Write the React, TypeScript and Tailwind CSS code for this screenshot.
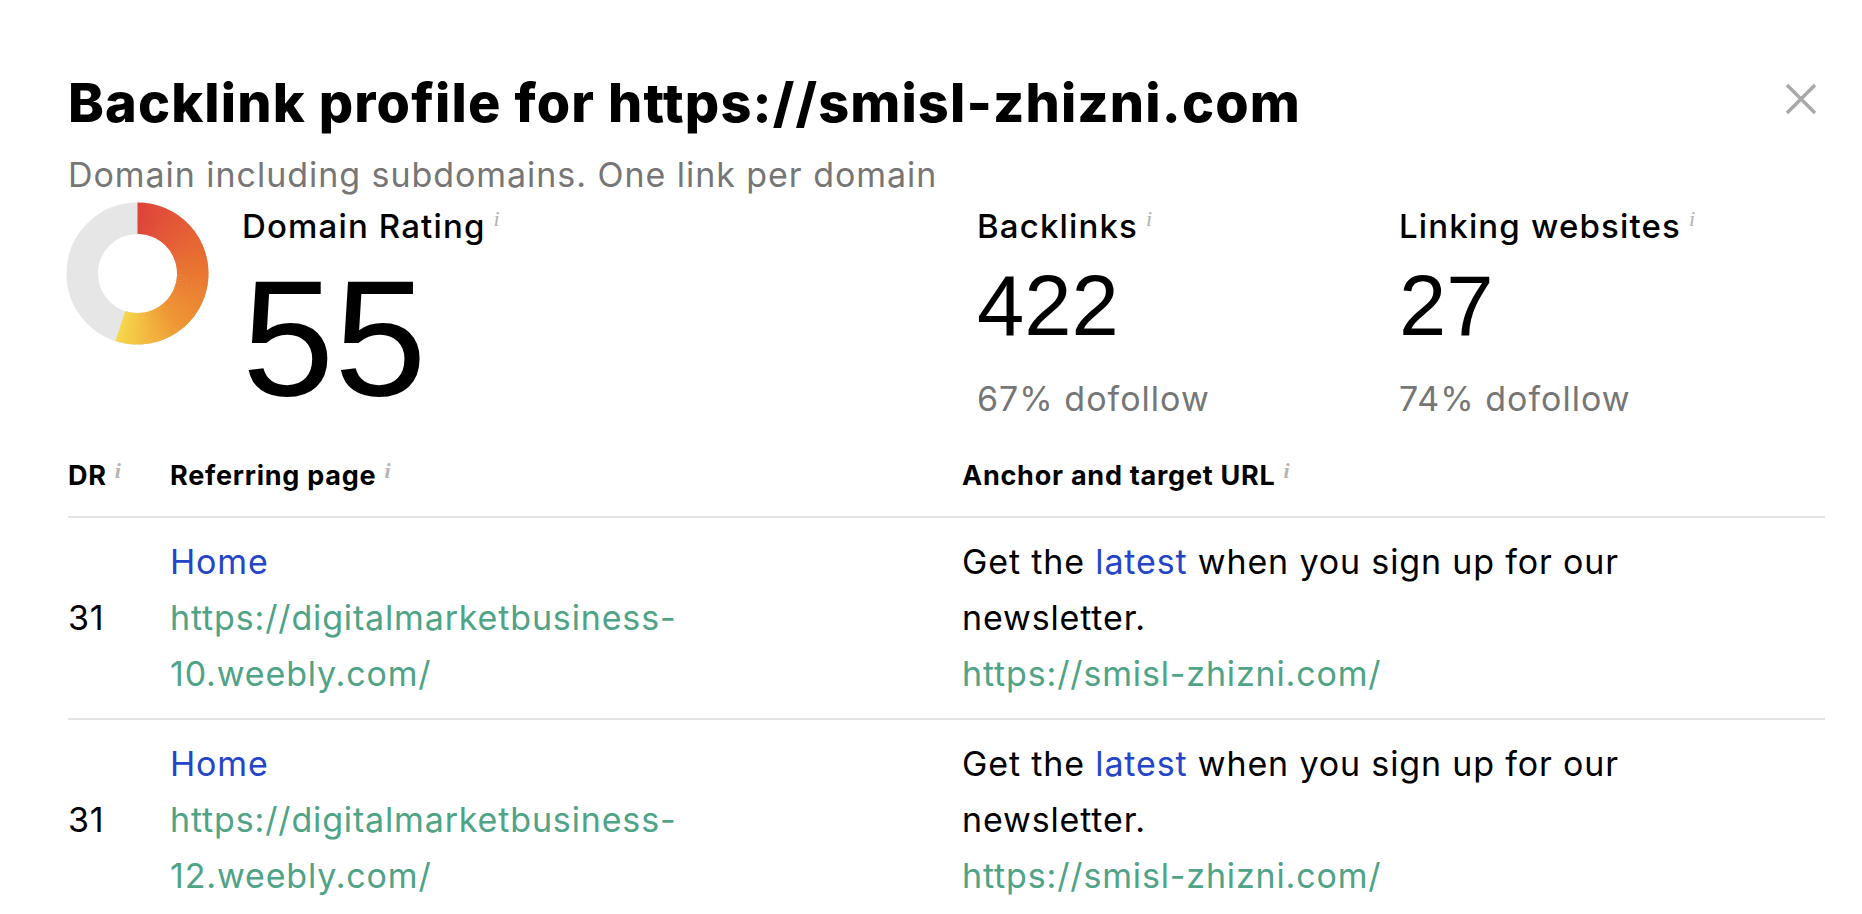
import React from 'react';

const body = { fontFamily: 'Inter, "Noto Sans", sans-serif' };
const nums = { fontFamily: '"Liberation Sans", Arial, sans-serif' };

// small grey "i" next to labels
const Info = () => (
    <span
        className="ml-[8px] align-top text-[22px] italic leading-none tracking-normal text-[#b4b4b4]"
        style={{ fontFamily: '"Liberation Serif", serif' }}
    >
        i
    </span>
);

const mix = (a: number[], b: number[], t: number) => a.map((v, i) => Math.round(v + (b[i] - v) * t));

const stops: [number, number[]][] = [
    [0, [223, 68, 58]],
    [0.4, [232, 112, 50]],
    [0.72, [239, 150, 52]],
    [1, [246, 214, 74]],
];

const colorAt = (t: number) => {
    for (let i = 0; i < stops.length - 1; i++) {
        const [t0, c0] = stops[i];
        const [t1, c1] = stops[i + 1];
        if (t <= t1) {
            const c = mix(c0, c1, (t - t0) / (t1 - t0));
            return `rgb(${c[0]},${c[1]},${c[2]})`;
        }
    }
    const c = stops[stops.length - 1][1];
    return `rgb(${c[0]},${c[1]},${c[2]})`;
};

const Donut: React.FC<{ value: number }> = ({ value }) => {
    const cx = 72.5;
    const r = 55.25;
    const span = (value / 100) * 360;
    const n = 60;
    const pt = (deg: number) => {
        const a = ((deg - 90) * Math.PI) / 180;
        return `${cx + r * Math.cos(a)} ${cx + r * Math.sin(a)}`;
    };
    const segs = [];
    for (let i = 0; i < n; i++) {
        const a0 = (i * span) / n;
        const a1 = Math.min(span, ((i + 1) * span) / n + (i < n - 1 ? 0.6 : 0));
        segs.push(
            <path
                key={i}
                d={`M ${pt(a0)} A ${r} ${r} 0 0 1 ${pt(a1)}`}
                fill="none"
                stroke={colorAt(i / (n - 1))}
                strokeWidth={31.5}
            />
        );
    }
    return (
        <svg width="145" height="145" viewBox="0 0 145 145" className="-ml-[3px] shrink-0">
            <circle cx={cx} cy={cx} r={r} fill="none" stroke="#e6e6e6" strokeWidth={31.5} />
            {segs}
        </svg>
    );
};

const rows = [
    { dr: 31, url: 'https://digitalmarketbusiness-10.weebly.com/' },
    { dr: 31, url: 'https://digitalmarketbusiness-12.weebly.com/' },
];

export default function App() {
    return (
        <div className="min-h-screen bg-white pl-[68px] pr-[37px] pt-[72px] text-black" style={body}>
            {/* Header */}
            <div className="flex items-start justify-between">
                <h1 className="text-[54px] font-extrabold leading-[62px] tracking-[0.021em]">
                    Backlink profile for https://smisl-zhizni.com
                </h1>
                <button className="mr-[8px] mt-[11px]">
                    <svg width="32" height="32" viewBox="0 0 32 32">
                        <path d="M2 2 L30 30 M30 2 L2 30" stroke="#a9a9a9" strokeWidth="3.5" />
                    </svg>
                </button>
            </div>
            <p className="mt-[21px] text-[34px] leading-[40px] tracking-[0.028em] text-[#767676]">
                Domain including subdomains. One link per domain
            </p>

            {/* Stats */}
            <div className="mt-[6px] flex">
                <div className="flex w-[909px] gap-[32px]">
                    <Donut value={55} />
                    <div className="pt-[7px]">
                        <div className="text-[33px] font-medium leading-[36px] tracking-[0.035em]">
                            Domain Rating
                            <Info />
                        </div>
                        <div className="mt-[11px] text-[166px] leading-[166px]" style={nums}>
                            55
                        </div>
                    </div>
                </div>
                {[
                    { label: 'Backlinks', value: '422', sub: '67% dofollow' },
                    { label: 'Linking websites', value: '27', sub: '74% dofollow' },
                ].map((s) => (
                    <div key={s.label} className="w-[422px] pt-[7px]">
                        <div className="text-[33px] font-medium leading-[36px] tracking-[0.035em]">
                            {s.label}
                            <Info />
                        </div>
                        <div className="mt-[19px] text-[85px] leading-[85px]" style={nums}>
                            {s.value}
                        </div>
                        <div className="mt-[31px] text-[34px] leading-[40px] tracking-[0.03em] text-[#767676]">
                            {s.sub}
                        </div>
                    </div>
                ))}
            </div>

            {/* Table */}
            <div className="mt-[39px]">
                <div className="flex border-b-2 border-[#e3e3e3] pb-[24px] text-[27px] font-bold leading-[32px] tracking-[0.028em]">
                    <div className="w-[102px]">
                        DR
                        <Info />
                    </div>
                    <div className="w-[792px]">
                        Referring page
                        <Info />
                    </div>
                    <div className="flex-1">
                        Anchor and target URL
                        <Info />
                    </div>
                </div>
                {rows.map((r, i) => (
                    <div
                        key={i}
                        className="flex items-center border-b-2 border-[#e3e3e3] py-[16px] text-[34px] leading-[56px] tracking-[0.025em]"
                    >
                        <div className="w-[102px]">{r.dr}</div>
                        <div className="w-[792px]">
                            <div className="text-[#2445c8]">Home</div>
                            <div className="w-[640px] text-[#4fa386]">{r.url}</div>
                        </div>
                        <div className="flex-1">
                            <div className="max-w-[760px]">
                                Get the <span className="text-[#2445c8]">latest</span> when you sign up for our
                                newsletter.
                            </div>
                            <div className="text-[#4fa386]">https://smisl-zhizni.com/</div>
                        </div>
                    </div>
                ))}
            </div>
        </div>
    );
}
